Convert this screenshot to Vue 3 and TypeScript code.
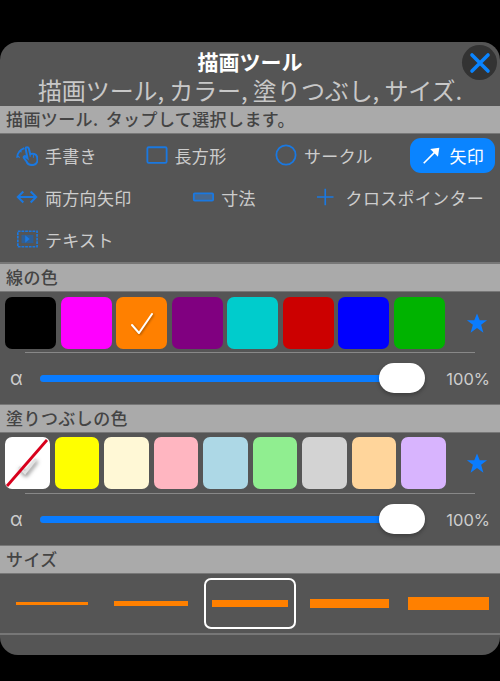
<script setup lang="ts">
interface Tool { id: string; label: string; active?: boolean }
const toolRows: Tool[][] = [
  [
    { id: 'hand', label: '手書き' },
    { id: 'rect', label: '長方形' },
    { id: 'circle', label: 'サークル' },
    { id: 'arrow', label: '矢印', active: true },
  ],
  [
    { id: 'both', label: '両方向矢印' },
    { id: 'dim', label: '寸法' },
    { id: 'cross', label: 'クロスポインター' },
  ],
  [{ id: 'text', label: 'テキスト' }],
]
const lineColors = ['#000000', '#ff00ff', '#ff8000', '#800080', '#00cccc', '#cc0000', '#0000ff', '#00b300']
const fillColors = ['#ffffff', '#ffff00', '#fff8d6', '#ffb6c1', '#add8e6', '#90ee90', '#d3d3d3', '#ffd59b', '#d8b4fe']
const sizes = [
  { w: 72, h: 3 },
  { w: 74, h: 5 },
  { w: 76, h: 7 },
  { w: 79, h: 9 },
  { w: 81, h: 13 },
]
</script>

<template>
  <div class="panel">
    <header class="head">
      <div class="title">描画ツール</div>
      <div class="subtitle">描画ツール, カラー, 塗りつぶし, サイズ.</div>
      <button class="close" aria-label="閉じる">
        <svg width="22" height="22" viewBox="0 0 22 22"><path d="M3 3 19 19M19 3 3 19" stroke="#0a84ff" stroke-width="3.6" stroke-linecap="round" fill="none"/></svg>
      </button>
    </header>

    <div class="section">描画ツール. タップして選択します。</div>
    <div class="tools">
      <div v-for="(row, i) in toolRows" :key="i" class="tool-row">
        <div v-for="t in row" :key="t.id" class="tool" :class="{ active: t.active }">
          <svg class="ticon" width="24" height="24" viewBox="0 0 24 24" fill="none" stroke="#1a78e0" stroke-width="1.8">
            <template v-if="t.id === 'hand'">
              <path d="M1 15C1.500 10 5 6 9 4.500" stroke-width="1.800"/>
              <path d="M4 15 1.500 12.500M6 9 4 7" stroke-width="1.200"/>
              <path d="M10.500 5c0-2 3-2 3.500 0l1.500 6c2.500-1 7-.5 7.500 3l.5 4c-.5 3-3 5-6 5s-5-1-6-4l-3-4c-.5-1.500 1-2.500 2-1l2 1.500z" stroke-width="2.200"/>
              <path d="M15.500 11v3M19 11.500V15" stroke-width="1.200"/>
            </template>
            <rect v-else-if="t.id === 'rect'" x="1.500" y="3.500" width="21" height="17" rx="1.500" stroke-width="2"/>
            <circle v-else-if="t.id === 'circle'" cx="12" cy="12" r="10.500" stroke-width="2"/>
            <template v-else-if="t.id === 'arrow'">
              <path d="M3 21 17 7" stroke="#fff" stroke-width="1.800"/>
              <path d="M10 5.500 20 4 18.500 14z" fill="#fff" stroke="none"/>
            </template>
            <path v-else-if="t.id === 'both'" d="M2 12H22M8 6 2 12l6 6M16 6l6 6-6 6" stroke-width="2.200"/>
            <rect v-else-if="t.id === 'dim'" x="2" y="8" width="21" height="8" rx="1" stroke-width="2" fill="#47688f"/>
            <path v-else-if="t.id === 'cross'" d="M9 3V21M0 12H18"/>
            <template v-else>
              <rect x="2" y="3.500" width="21" height="17" stroke-dasharray="3 1"/>
              <rect x="6" y="7.500" width="13" height="9" fill="#2f5f95" stroke="none"/>
              <path d="M10 8v8l5-4z" fill="#1a78e0" stroke="none"/>
            </template>
          </svg>
          <span>{{ t.label }}</span>
        </div>
      </div>
    </div>

    <div class="section">線の色</div>
    <div class="swatches">
      <div class="swatch-row line">
        <div v-for="c in lineColors" :key="c" class="swatch" :style="{ background: c }">
          <svg v-if="c === '#ff8000'" width="24" height="24" viewBox="0 0 24 24" class="check"><path d="M2 13 9 21 22 2" fill="none" stroke="#fff" stroke-width="2" stroke-linecap="round" stroke-linejoin="round"/></svg>
        </div>
      </div>
      <svg class="star" width="22" height="22" viewBox="0 0 24 24"><path d="M12 1.500 15 9h8l-6.500 5 2.500 8.500L12 17.500 5 22.500 7.500 14 1 9h8z" fill="#0a7cff"/></svg>
    </div>
    <div class="alpha">
      <span class="a-label">α</span>
      <div class="track"><div class="fill"></div><div class="thumb"></div></div>
      <span class="a-val">100%</span>
    </div>

    <div class="section">塗りつぶしの色</div>
    <div class="swatches tight">
      <div class="swatch-row fillrow">
        <div v-for="(c, i) in fillColors" :key="c" class="swatch" :style="{ background: c }">
          <svg v-if="i === 0" width="44" height="52" viewBox="0 0 44 52" class="none-mark">
            <path class="none-check" d="M14 30 20 36 31 22" fill="none" stroke="#e2e2e2" stroke-width="2.500"/>
            <path d="M2 49 42 3" stroke="#d8001c" stroke-width="2.800"/>
          </svg>
        </div>
      </div>
      <svg class="star" width="22" height="22" viewBox="0 0 24 24"><path d="M12 1.500 15 9h8l-6.500 5 2.500 8.500L12 17.500 5 22.500 7.500 14 1 9h8z" fill="#0a7cff"/></svg>
    </div>
    <div class="alpha">
      <span class="a-label">α</span>
      <div class="track"><div class="fill"></div><div class="thumb"></div></div>
      <span class="a-val">100%</span>
    </div>

    <div class="section">サイズ</div>
    <div class="sizes">
      <div v-for="(s, i) in sizes" :key="i" class="size" :class="{ selected: i === 2 }">
        <div class="bar" :style="{ width: s.w + 'px', height: s.h + 'px' }"></div>
      </div>
    </div>
    <div class="foot"></div>
  </div>
</template>

<style>
html, body { margin: 0; background: #000; }
</style>

<style scoped>
.panel {
  box-sizing: border-box;
  width: 500px;
  margin-top: 42px;
  background: #555;
  border-radius: 18px;
  font-family: "Noto Sans CJK JP", "Noto Sans", sans-serif;
  overflow: hidden;
}
.head {
  position: relative;
  height: 64px;
  text-align: center;
}
.title {
  padding-top: 4px;
  height: 30px;
  line-height: 30px;
  font-size: 21px;
  font-weight: 700;
  color: #fff;
}
.subtitle {
  height: 29px;
  line-height: 27px;
  font-size: 24px;
  letter-spacing: -0.1px;
  color: #c8c8c8;
  white-space: nowrap;
}
.close {
  position: absolute;
  top: 3px;
  right: 3px;
  width: 35px;
  height: 35px;
  padding: 0;
  border: 0;
  border-radius: 50%;
  background: #333;
  display: flex;
  align-items: center;
  justify-content: center;
}
.section {
  box-sizing: border-box;
  height: 28px;
  line-height: 26px;
  padding-left: 6px;
  background: #aaa;
  color: #444;
  font-size: 17px;
  font-weight: 500;
  letter-spacing: .4px;
  word-spacing: 3px;
  border-bottom: 1px solid #777;
  white-space: nowrap;
}
.tools {
  box-sizing: border-box;
  height: 130px;
  padding: 0 5px;
  border-bottom: 2px solid #777;
}
.tool-row {
  height: 42px;
  display: flex;
  justify-content: space-between;
  align-items: center;
}
.tool {
  box-sizing: border-box;
  height: 35px;
  display: flex;
  align-items: center;
  gap: 7px;
  padding: 0 11px;
  border-radius: 11px;
  color: #cdcdcd;
  font-size: 17px;
  letter-spacing: .3px;
  white-space: nowrap;
}
.ticon { width: 22px; height: 22px; flex: none; }
.tool.active { background: #0a84ff; color: #fff; gap: 6px; }
.swatches {
  position: relative;
  display: flex;
  align-items: center;
  justify-content: space-between;
  padding: 5px 12px 4px 5px;
  height: 61px;
  box-sizing: border-box;
}
.swatches.tight { padding-top: 4px; padding-bottom: 5px; }
.swatches::after {
  content: "";
  position: absolute;
  left: 25px;
  right: 25px;
  bottom: 0;
  height: 1px;
  background: #888;
}
.swatch-row { display: flex; }
.swatch-row.line { gap: 4.500px; }
.swatch-row.fillrow { gap: 5px; }
.swatch {
  position: relative;
  height: 52px;
  border-radius: 7px;
  display: flex;
  align-items: center;
  justify-content: center;
  overflow: hidden;
}
.line .swatch { width: 51px; }
.fillrow .swatch { width: 44.500px; }
.check { filter: drop-shadow(1px 1px 1px rgba(0,0,0,.35)); margin-top: 1px; }
.none-mark { position: absolute; left: 0; top: 0; }
.none-check { filter: drop-shadow(1px 2px 2px rgba(0,0,0,.6)); }
.alpha {
  box-sizing: border-box;
  height: 52px;
  display: flex;
  align-items: center;
  padding: 0 10px 0 10px;
  border-bottom: 1px solid #777;
  background: #555;
}
.a-label {
  width: 30px;
  color: #cdcdcd;
  font-family: "Inter", sans-serif;
  font-size: 19px;
}
.track {
  position: relative;
  width: 385px;
  height: 7px;
  border-radius: 4px;
  background: #666;
}
.fill {
  width: 360px;
  height: 100%;
  border-radius: 4px;
  background: #0a7cff;
}
.thumb {
  position: absolute;
  right: 0;
  top: -12px;
  width: 46px;
  height: 30px;
  border-radius: 15px;
  background: #fff;
  box-shadow: 0 2px 4px rgba(0,0,0,.3);
}
.a-val {
  margin-left: auto;
  color: #cdcdcd;
  font-family: "Inter", sans-serif;
  font-size: 16.500px;
}
.sizes {
  box-sizing: border-box;
  height: 61px;
  display: flex;
  align-items: center;
  justify-content: space-between;
  padding: 0 6px;
  border-bottom: 2px solid #777;
}
.size {
  box-sizing: border-box;
  width: 92px;
  height: 51px;
  display: flex;
  align-items: center;
  justify-content: center;
  border: 2px solid transparent;
  border-radius: 7px;
}
.size.selected { border-color: #fff; }
.bar { background: #ff8000; flex: none; }
.foot { height: 20px; }
</style>
